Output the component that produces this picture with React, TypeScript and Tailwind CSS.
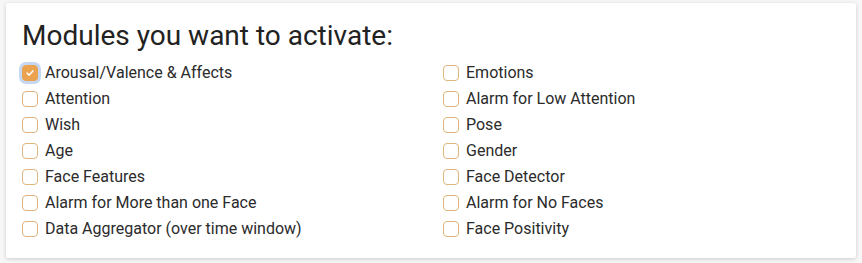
import { useState } from 'react';

const LEFT = [
  'Arousal/Valence & Affects',
  'Attention',
  'Wish',
  'Age',
  'Face Features',
  'Alarm for More than one Face',
  'Data Aggregator (over time window)',
];

const RIGHT = [
  'Emotions',
  'Alarm for Low Attention',
  'Pose',
  'Gender',
  'Face Detector',
  'Alarm for No Faces',
  'Face Positivity',
];

function Check({ label, checked, onToggle }: { label: string; checked: boolean; onToggle: () => void }) {
  return (
    <label className="flex h-[26px] cursor-pointer items-center gap-[7px]">
      <span
        onClick={onToggle}
        className={`flex h-4 w-4 items-center justify-center rounded-[4px] border ${
          checked
            ? 'border-[#e8a24c] bg-[#eba350] ring-[3px] ring-[#c6d8f1]'
            : 'border-[#dfb57e] bg-white'
        }`}
      >
        {checked ? (
          <svg viewBox="0 0 12 12" className="h-2.5 w-2.5">
            <path d="M2.5 6.2 L5 8.5 L9.5 3.5" fill="none" stroke="white" strokeWidth="1.8" strokeLinecap="round" strokeLinejoin="round" />
          </svg>
        ) : null}
      </span>
      <span className="text-[16px] text-[#2b2b2b]">{label}</span>
    </label>
  );
}

export default function App() {
  const [checked, setChecked] = useState<Record<string, boolean>>({ 'Arousal/Valence & Affects': true });
  const toggle = (k: string) => setChecked((p) => ({ ...p, [k]: !p[k] }));

  return (
    <div className="h-[263px] w-[862px] bg-[#f7f7f7] pt-[3px] pl-[6px] font-['Roboto',sans-serif]">
      <div className="h-[255px] w-[850px] rounded-[2px] bg-white px-4 pt-[16px] shadow-[0_1px_4px_rgba(0,0,0,0.18)]">
        <h2 className="text-[28px] leading-[34px] text-[#222]">Modules you want to activate:</h2>
        <div className="mt-[7px] grid grid-cols-2 gap-x-6">
          <div>
            {LEFT.map((l) => (
              <Check key={l} label={l} checked={!!checked[l]} onToggle={() => toggle(l)} />
            ))}
          </div>
          <div>
            {RIGHT.map((l) => (
              <Check key={l} label={l} checked={!!checked[l]} onToggle={() => toggle(l)} />
            ))}
          </div>
        </div>
      </div>
    </div>
  );
}
